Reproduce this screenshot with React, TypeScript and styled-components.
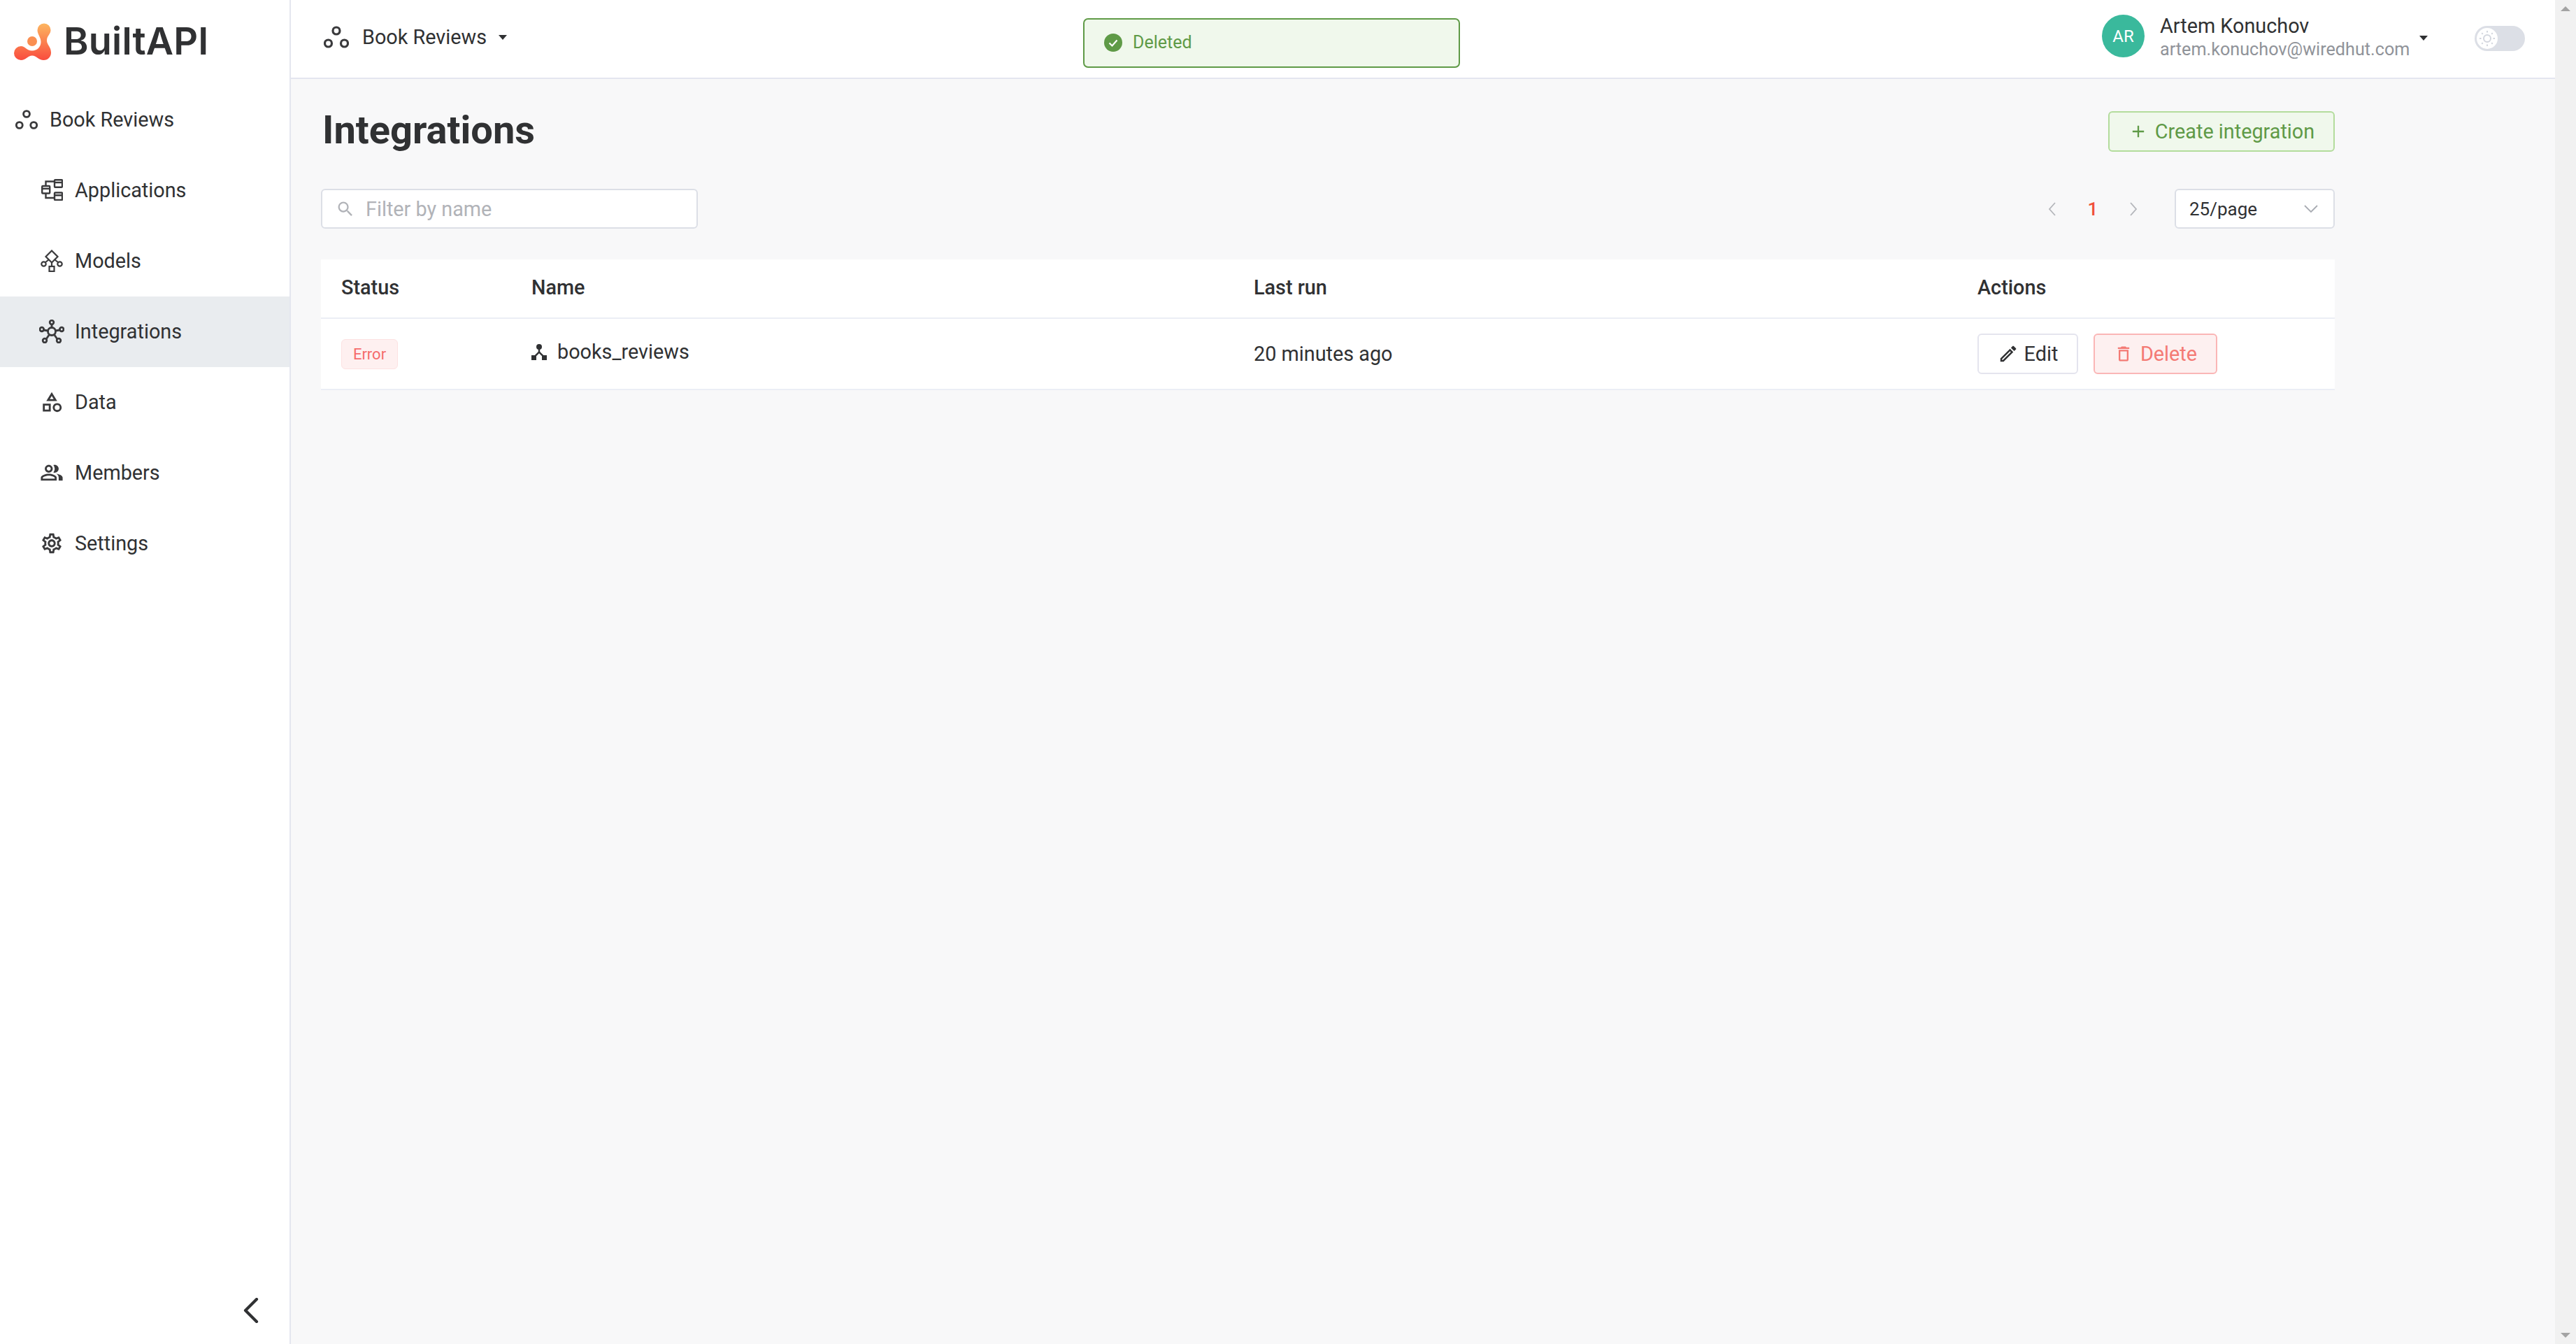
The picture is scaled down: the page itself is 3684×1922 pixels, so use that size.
import styled, { createGlobalStyle } from "styled-components";
import { MdOutlineCategory, MdOutlinePeopleAlt, MdOutlineSettings, MdOutlineEdit, MdOutlineDeleteOutline, MdAdd, MdSearch } from "react-icons/md";
import { ReactNode } from "react";

const GlobalStyle = createGlobalStyle`
  html, body { margin: 0; padding: 0; background: #f8f8f9; }
  * { box-sizing: border-box; }
  body { font-family: Roboto, "Liberation Sans", sans-serif; color: #303133; overflow: hidden; }
`;

const Shell = styled.div`
  position: relative;
  display: flex;
  width: 3684px;
  height: 1922px;
  overflow: hidden;
`;

const Sidebar = styled.aside`
  width: 416px;
  flex: none;
  display: flex;
  flex-direction: column;
  background: #fff;
  border-right: 2px solid #e4e6ef;
`;

const LogoBar = styled.div`
  height: 112px;
  padding: 33px 0 0 20px;
  display: flex;
  align-items: flex-start;
  gap: 17px;
`;

const LogoText = styled.span`
  font-family: Inter, sans-serif;
  font-size: 54px;
  line-height: 52px;
  font-weight: 600;
  color: #303133;
  letter-spacing: 0.2px;
`;

const Nav = styled.nav`
  padding-top: 9px;
  display: flex;
  flex-direction: column;
`;

const NavItem = styled.a<{ $sub?: boolean; $active?: boolean }>`
  height: 101px;
  display: flex;
  align-items: center;
  gap: ${(p) => (p.$sub ? "15px" : "17px")};
  padding-left: ${(p) => (p.$sub ? "56px" : "22px")};
  padding-bottom: 2px;
  font-size: 28.800px;
  color: #303133;
  background: ${(p) => (p.$active ? "#e9ecef" : "transparent")};
`;

const NavIcon = styled.span<{ $sub?: boolean }>`
  width: ${(p) => (p.$sub ? "36px" : "32px")};
  flex: none;
  display: flex;
  justify-content: center;
  color: #3a3a3c;
`;

const Collapse = styled.div`
  margin-top: auto;
  padding: 0 44px 30px 0;
  display: flex;
  justify-content: flex-end;
`;

const Main = styled.main`
  flex: 1;
  display: flex;
  flex-direction: column;
  min-width: 0;
`;

const Header = styled.header`
  height: 113px;
  flex: none;
  display: flex;
  align-items: center;
  justify-content: space-between;
  padding: 0 43px 3px 47px;
  background: #fff;
  border-bottom: 2px solid #e4e6ef;
`;

const Project = styled.div`
  display: flex;
  align-items: center;
  gap: 19px;
  font-size: 28.800px;
  color: #303133;
  padding-bottom: 2px;
`;

const Caret = styled.span<{ $gap: number }>`
  width: 0;
  height: 0;
  margin-left: ${(p) => p.$gap}px;
  border-left: 6px solid transparent;
  border-right: 6px solid transparent;
  border-top: 7px solid #303133;
`;

const UserArea = styled.div`
  display: flex;
  align-items: center;
`;

const Avatar = styled.div`
  width: 61px;
  height: 61px;
  margin-bottom: 5px;
  border-radius: 50%;
  background: #3ab99c;
  color: #fff;
  font-size: 24px;
  display: flex;
  align-items: center;
  justify-content: center;
`;

const UserText = styled.div`
  width: 355px;
  margin-left: 22px;
  display: flex;
  flex-direction: column;
  gap: 1px;
`;

const UserName = styled.div`
  font-size: 28.800px;
  line-height: 33px;
  color: #303133;
`;

const UserMail = styled.div`
  font-size: 25.200px;
  line-height: 32px;
  color: #909399;
`;

const Toggle = styled.div`
  margin: 2px 0 0 67px;
  width: 72px;
  height: 36px;
  border-radius: 18px;
  background: #dcdfe6;
  padding: 3px;
  display: flex;
`;

const ToggleKnob = styled.div`
  width: 30px;
  height: 30px;
  border-radius: 50%;
  background: #fff;
  display: flex;
  align-items: center;
  justify-content: center;
`;

const Toast = styled.div`
  position: absolute;
  left: 1549px;
  top: 26px;
  width: 539px;
  height: 71px;
  display: flex;
  align-items: center;
  gap: 15px;
  padding: 0 0 2px 28px;
  background: #f0f8ec;
  border: 2px solid #5f9a47;
  border-radius: 7px;
  font-size: 25px;
  color: #5f9a47;
`;

const Content = styled.div`
  width: 2880px;
  margin-left: 43px;
`;

const TitleRow = styled.div`
  height: 157px;
  display: flex;
  align-items: center;
  justify-content: space-between;
  padding-bottom: 7px;
`;

const Title = styled.h1`
  margin: -4px 0 0 2px;
  font-size: 56px;
  font-weight: 700;
  color: #303133;
`;

const CreateButton = styled.button`
  width: 324px;
  height: 58px;
  display: flex;
  align-items: center;
  justify-content: center;
  gap: 10px;
  padding: 0;
  background: #f0f8ec;
  border: 2px solid #b3dc9c;
  border-radius: 6px;
  font: 400 28.800px Roboto, sans-serif;
  color: #5f9a47;
`;

const Toolbar = styled.div`
  height: 57px;
  display: flex;
  align-items: center;
  justify-content: space-between;
  margin-bottom: 44px;
`;

const SearchBox = styled.div`
  width: 539px;
  height: 57px;
  display: flex;
  align-items: center;
  gap: 15px;
  padding-left: 19px;
  background: #fff;
  border: 2px solid #dcdfe6;
  border-radius: 6px;
  font-size: 28.800px;
  color: #b1b3b8;
`;

const Pager = styled.div`
  display: flex;
  align-items: center;
`;

const PageNum = styled.span`
  width: 104px;
  text-align: center;
  font-size: 26px;
  font-weight: 500;
  color: #f0503a;
`;

const PageSelect = styled.div`
  width: 229px;
  height: 57px;
  margin-left: 53px;
  display: flex;
  align-items: center;
  justify-content: space-between;
  padding: 0 22px 0 19px;
  background: #fff;
  border: 2px solid #dcdfe6;
  border-radius: 6px;
  font-size: 26px;
  color: #303133;
`;

const Table = styled.div`
  background: #fff;
  border-bottom: 2px solid #ebeef5;
`;

const Row = styled.div<{ $head?: boolean }>`
  display: grid;
  grid-template-columns: 272px 1033px 1035px 540px;
  align-items: center;
  height: ${(p) => (p.$head ? "85px" : "100px")};
  padding-bottom: ${(p) => (p.$head ? "3px" : "0")};
  border-bottom: ${(p) => (p.$head ? "2px solid #ebeef5" : "none")};
  font-size: 28.800px;
  font-weight: ${(p) => (p.$head ? 500 : 400)};
  color: #303133;
`;

const Cell = styled.div`
  padding-left: 29px;
  display: flex;
  align-items: center;
`;

const Tag = styled.span`
  width: 81px;
  height: 43px;
  display: flex;
  align-items: center;
  justify-content: center;
  background: #fef0f0;
  border: 1px solid #fde2e2;
  border-radius: 6px;
  font-size: 22px;
  color: #f56c6c;
`;

const NameCell = styled.span`
  display: flex;
  align-items: center;
  gap: 15px;
  margin-top: -6px;
`;

const ActionButton = styled.button<{ $danger?: boolean }>`
  height: 58px;
  width: ${(p) => (p.$danger ? "177px" : "144px")};
  margin-right: 22px;
  display: flex;
  align-items: center;
  justify-content: center;
  gap: ${(p) => (p.$danger ? "10px" : "8px")};
  padding: 0;
  background: ${(p) => (p.$danger ? "#fdf0f0" : "#fff")};
  border: 2px solid ${(p) => (p.$danger ? "#fab6b6" : "#e4e4ee")};
  border-radius: 6px;
  font: 400 28.800px Roboto, sans-serif;
  color: ${(p) => (p.$danger ? "#f47a74" : "#303133")};
`;

const Scrollbar = styled.div`
  width: 30px;
  flex: none;
  display: flex;
  flex-direction: column;
  align-items: center;
  justify-content: space-between;
  padding: 9px 0;
  background: #f1f1f1;
`;

const ScrollArrow = styled.span<{ $down?: boolean }>`
  width: 0;
  height: 0;
  border-left: 7px solid transparent;
  border-right: 7px solid transparent;
  ${(p) => (p.$down ? "border-top: 7px solid #a3a3a3;" : "border-bottom: 7px solid #a3a3a3;")}
`;

const Circles = ({ size }: { size: number }) => (
  <svg width={size} height={size} viewBox="0 0 36 32" fill="none" stroke="#3a3a3c" strokeWidth="3.2">
    <ellipse cx="18" cy="7" rx="5" ry="5" />
    <ellipse cx="6.5" cy="25" rx="5" ry="5" />
    <ellipse cx="29.5" cy="25" rx="5" ry="5" />
  </svg>
);

const Logo = () => (
  <svg width="54" height="54" viewBox="0 0 54 54">
    <defs>
      <linearGradient id="logoFill" x1="0" y1="0" x2="0" y2="1">
        <stop offset="0" stopColor="#fdb660" />
        <stop offset="1" stopColor="#f94c3e" />
      </linearGradient>
    </defs>
    <path
      fill="url(#logoFill)"
      d="M43 .5A9.500 9.500 0 0 1 52.500 10C52.500 16 47 18 47 25C47 31 53 34 53 42A10.500 10.500 0 0 1 42.500 53C35 53 32 46.500 26 46.500C20 46.500 17 53 10 53A10 10 0 0 1 0 43A10 10 0 0 1 10 33C16 33 18 39.500 26 39.500C33 39.500 38.500 34 38.500 27C38.500 20 33.500 16 33.500 10A9.500 9.500 0 0 1 43 .5Z"
    />
    <circle cx="26" cy="26" r="7" fill="#fa8f52" />
  </svg>
);

const AppsIcon = () => (
  <svg width="31" height="31" viewBox="0 0 31 31" fill="none" stroke="#3a3a3c" strokeWidth="2.400">
    <rect x="19" y="1.200" width="11" height="10.500" rx="1" />
    <path d="M19 5h11" />
    <rect x="1.200" y="10" width="11" height="10.500" rx="1" />
    <path d="M1.200 13.800h11" />
    <rect x="19" y="19.500" width="11" height="10.500" rx="1" />
    <path d="M19 23.300h11M6.500 10V3.500H19M6.500 20.500v6.500H19" />
  </svg>
);

const ModelsIcon = () => (
  <svg width="32" height="32" viewBox="0 0 32 32" fill="none" stroke="#3a3a3c" strokeWidth="2.200">
    <path d="M16 1.500 24.500 10 16 18.500 7.500 10z" />
    <path d="M11.500 14.500 6.500 18.500M20.500 14.500l5 4M16 18.500V24" />
    <circle cx="4.500" cy="20.500" r="3.200" />
    <circle cx="27.500" cy="20.500" r="3.200" />
    <rect x="12.500" y="24" width="7" height="7" />
  </svg>
);

const HubIcon = () => (
  <svg width="36" height="34" viewBox="0 0 36 34" fill="none" stroke="#3a3a3c" strokeWidth="2.800">
    <circle cx="18" cy="17" r="5.500" />
    <circle cx="18" cy="4" r="2.800" />
    <circle cx="3.800" cy="14" r="2.800" />
    <circle cx="32.200" cy="14" r="2.800" />
    <circle cx="8" cy="30" r="2.800" />
    <circle cx="28" cy="30" r="2.800" />
    <path d="M18 7v4.500M6.500 15l6.500 1M29.500 15 23 16M10 28l4.500-6.500M26 28l-4.500-6.500" />
  </svg>
);

const BranchIcon = () => (
  <svg width="22" height="24" viewBox="0 0 22 24" fill="#303133">
    <circle cx="11" cy="5" r="4" />
    <rect x="0" y="17" width="7" height="7" />
    <rect x="15" y="17" width="7" height="7" />
    <path d="M9.800 8h2.400v4l6 6-1.700 1.700L11 14.200l-5.500 5.500L3.800 18l6-6z" />
  </svg>
);

const ChevronLeft = () => (
  <svg width="22" height="36" viewBox="0 0 22 36" fill="none" stroke="#303133" strokeWidth="4.200" strokeLinecap="round" strokeLinejoin="round">
    <path d="M19 2 3 18l16 16" />
  </svg>
);

const PagerChevron = ({ right }: { right?: boolean }) => (
  <svg width="12" height="20" viewBox="0 0 12 20" fill="none" stroke="#b4b6bb" strokeWidth="1.800">
    <path d={right ? "M2 1l8 9-8 9" : "M10 1l-8 9 8 9"} />
  </svg>
);

const SunIcon = () => (
  <svg width="26" height="26" viewBox="0 0 26 26" fill="none" stroke="#d3d6de" strokeWidth="2">
    <circle cx="13" cy="13" r="5" />
    <path d="M13 2v2.500M13 21.500V24M2 13h2.500M21.500 13H24M5.200 5.200l1.600 1.600M19.200 19.200l1.600 1.600M5.200 20.800l1.600-1.600M19.200 6.800l1.600-1.600" />
  </svg>
);

const CheckBadge = () => (
  <svg width="26" height="26" viewBox="0 0 26 26">
    <circle cx="13" cy="13" r="13" fill="#5f9a47" />
    <path d="M7.500 13.500 11.500 17.500 18.500 9.500" fill="none" stroke="#fff" strokeWidth="2.200" />
  </svg>
);

type NavEntry = { label: string; icon: ReactNode; sub?: boolean; active?: boolean };

const navEntries: NavEntry[] = [
  { label: "Book Reviews", icon: <Circles size={32} /> },
  { label: "Applications", icon: <AppsIcon />, sub: true },
  { label: "Models", icon: <ModelsIcon />, sub: true },
  { label: "Integrations", icon: <HubIcon />, sub: true, active: true },
  { label: "Data", icon: <MdOutlineCategory size={34} />, sub: true },
  { label: "Members", icon: <MdOutlinePeopleAlt size={34} />, sub: true },
  { label: "Settings", icon: <MdOutlineSettings size={34} />, sub: true },
];

const App = () => (
  <Shell>
    <GlobalStyle />
    <Sidebar>
      <LogoBar>
        <Logo />
        <LogoText>BuiltAPI</LogoText>
      </LogoBar>
      <Nav>
        {navEntries.map((item) => (
          <NavItem key={item.label} $sub={item.sub} $active={item.active}>
            <NavIcon $sub={item.sub}>{item.icon}</NavIcon>
            {item.label}
          </NavItem>
        ))}
      </Nav>
      <Collapse>
        <ChevronLeft />
      </Collapse>
    </Sidebar>
    <Main>
      <Header>
        <Project>
          <Circles size={36} />
          Book Reviews
          <Caret $gap={-2} />
        </Project>
        <UserArea>
          <Avatar>AR</Avatar>
          <UserText>
            <UserName>Artem Konuchov</UserName>
            <UserMail>artem.konuchov@wiredhut.com</UserMail>
          </UserText>
          <Caret $gap={16} />
          <Toggle>
            <ToggleKnob>
              <SunIcon />
            </ToggleKnob>
          </Toggle>
        </UserArea>
      </Header>
      <Content>
        <TitleRow>
          <Title>Integrations</Title>
          <CreateButton>
            <MdAdd size={28} />
            Create integration
          </CreateButton>
        </TitleRow>
        <Toolbar>
          <SearchBox>
            <MdSearch size={28} />
            Filter by name
          </SearchBox>
          <Pager>
            <PagerChevron />
            <PageNum>1</PageNum>
            <PagerChevron right />
            <PageSelect>
              25/page
              <svg width="20" height="12" viewBox="0 0 20 12" fill="none" stroke="#a8abb2" strokeWidth="1.800">
                <path d="M1 1l9 9 9-9" />
              </svg>
            </PageSelect>
          </Pager>
        </Toolbar>
        <Table>
          <Row $head>
            <Cell>Status</Cell>
            <Cell>Name</Cell>
            <Cell>Last run</Cell>
            <Cell>Actions</Cell>
          </Row>
          <Row>
            <Cell>
              <Tag>Error</Tag>
            </Cell>
            <Cell>
              <NameCell>
                <BranchIcon />
                books_reviews
              </NameCell>
            </Cell>
            <Cell>20 minutes ago</Cell>
            <Cell>
              <ActionButton>
                <MdOutlineEdit size={30} />
                Edit
              </ActionButton>
              <ActionButton $danger>
                <MdOutlineDeleteOutline size={28} />
                Delete
              </ActionButton>
            </Cell>
          </Row>
        </Table>
      </Content>
    </Main>
    <Scrollbar>
      <ScrollArrow />
      <ScrollArrow $down />
    </Scrollbar>
    <Toast>
      <CheckBadge />
      Deleted
    </Toast>
  </Shell>
);

export default App;
